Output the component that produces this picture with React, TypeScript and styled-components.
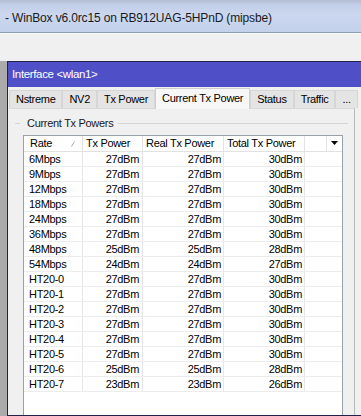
import React from "react";
import styled, { createGlobalStyle, css } from "styled-components";

const GlobalStyle = createGlobalStyle`
  html, body { margin: 0; padding: 0; background: #f0f0f0; }
  body { font-family: "Liberation Sans", Arial, sans-serif; }
  * { box-sizing: border-box; }
`;

const Screen = styled.div`
  width: 361px;
  height: 416px;
  overflow: hidden;
  display: flex;
  flex-direction: column;
  background: #f0f0f0;
`;

const TitleBar = styled.div`
  height: 33px;
  flex: none;
  display: flex;
  align-items: center;
  padding-top: 4px;
  border-bottom: 1px solid #8e9bb8;
  background: linear-gradient(
    180deg,
    #b4bdd4 0px,
    #c3cfe8 5px,
    #cbd7ef 45%,
    #c4d1eb 100%
  );
  overflow: hidden;
`;

const TitleText = styled.span`
  margin-left: 5px;
  white-space: nowrap;
  font-size: 12px;
  letter-spacing: -0.15px;
  color: #1a1a1a;
`;

const MenuStrip = styled.div`
  height: 28px;
  flex: none;
  background: #f0f0f0;
  border-top: 1px solid #fbfbfb;
`;

const Workspace = styled.div`
  flex: 1;
  display: flex;
  padding-left: 7px;
  background: #ababab;
  min-height: 0;
`;

const Window = styled.div`
  width: 380px;
  flex: none;
  display: flex;
  flex-direction: column;
  border: 1px solid #23234a;
`;

const WinTitle = styled.div`
  height: 25px;
  flex: none;
  background: #4f4fc8;
  color: #ffffff;
  font-size: 11.5px;
  letter-spacing: -0.35px;
  line-height: 25px;
  padding-left: 4px;
`;

const WinBody = styled.div`
  flex: 1;
  display: flex;
  flex-direction: column;
  background: #f0f0f0;
  padding-left: 1px;
`;

const TabRow = styled.div`
  height: 21px;
  flex: none;
  display: flex;
  align-items: flex-end;
  position: relative;
  z-index: 1;
`;

const Tab = styled.div<{ $active?: boolean }>`
  height: 18px;
  padding: 0 6px;
  border: 1px solid #d6d6d6;
  border-bottom: none;
  background: #e4e4e4;
  font-size: 11px;
  letter-spacing: -0.3px;
  line-height: 17px;
  color: #000;
  white-space: nowrap;
  ${(p) =>
    p.$active &&
    css`
      height: 21px;
      margin-bottom: -1px;
      line-height: 19px;
      background: #f7f7f7;
      border-color: #cfcfcf;
    `}
`;

const TabPanel = styled.div`
  width: 346px;
  flex: 1;
  display: flex;
  flex-direction: column;
  border-top: 1px solid #d9d9d9;
  border-right: 1px solid #b9b9b9;
  background: #f0f0f0;
  padding: 8px 6px 0 6px;
`;

const GroupHead = styled.div`
  height: 13px;
  display: flex;
  align-items: center;
`;

const GroupRule = styled.div<{ $w?: number }>`
  height: 1px;
  background: #d5d5d5;
  ${(p) => (p.$w ? `width: ${p.$w}px; flex: none;` : `flex: 1;`)}
`;

const GroupLabel = styled.span`
  font-size: 11px;
  letter-spacing: -0.3px;
  color: #1a1a1a;
  padding: 0 5px 0 7px;
  white-space: nowrap;
  line-height: 13px;
`;

const Table = styled.div`
  margin: 5px 5px 0 8px;
  flex: 1;
  border: 1px solid #9aa0a8;
  border-bottom: none;
  background: #ffffff;
`;

const HeaderRow = styled.div`
  height: 16px;
  display: grid;
  grid-template-columns: 59px 60px 81px 81px 22px 1fr;
  border-bottom: 1px solid #e2e2e2;
`;

const HeadCell = styled.div<{ $pad?: number }>`
  position: relative;
  font-size: 11px;
  letter-spacing: -0.3px;
  line-height: 15px;
  color: #000;
  padding-left: ${(p) => p.$pad ?? 3}px;
  border-right: 1px solid #e3e3e3;
  white-space: nowrap;
  overflow: hidden;
  &:last-child {
    border-right: none;
  }
`;

const SortMark = styled.svg`
  position: absolute;
  right: 7px;
  top: 5px;
`;

const DropCell = styled.div`
  display: flex;
  align-items: center;
  justify-content: center;
  padding-bottom: 2px;
`;

const DataRow = styled.div`
  height: 15px;
  display: grid;
  grid-template-columns: 59px 60px 81px 81px 1fr;
  border-bottom: 1px solid #ececec;
`;

const Cell = styled.div<{ $right?: boolean; $pad?: number }>`
  font-size: 11px;
  letter-spacing: -0.3px;
  line-height: 14px;
  color: #000;
  white-space: nowrap;
  border-right: 1px solid #e6e6e6;
  text-align: ${(p) => (p.$right ? "right" : "left")};
  ${(p) =>
    p.$right
      ? `padding-right: ${p.$pad ?? 3}px;`
      : `padding-left: ${p.$pad ?? 5}px;`}
  &:last-child {
    border-right: none;
  }
`;

type Row = [string, string, string, string];

const rows: Row[] = [
  ["6Mbps", "27dBm", "27dBm", "30dBm"],
  ["9Mbps", "27dBm", "27dBm", "30dBm"],
  ["12Mbps", "27dBm", "27dBm", "30dBm"],
  ["18Mbps", "27dBm", "27dBm", "30dBm"],
  ["24Mbps", "27dBm", "27dBm", "30dBm"],
  ["36Mbps", "27dBm", "27dBm", "30dBm"],
  ["48Mbps", "25dBm", "25dBm", "28dBm"],
  ["54Mbps", "24dBm", "24dBm", "27dBm"],
  ["HT20-0", "27dBm", "27dBm", "30dBm"],
  ["HT20-1", "27dBm", "27dBm", "30dBm"],
  ["HT20-2", "27dBm", "27dBm", "30dBm"],
  ["HT20-3", "27dBm", "27dBm", "30dBm"],
  ["HT20-4", "27dBm", "27dBm", "30dBm"],
  ["HT20-5", "27dBm", "27dBm", "30dBm"],
  ["HT20-6", "25dBm", "25dBm", "28dBm"],
  ["HT20-7", "23dBm", "23dBm", "26dBm"],
];

const tabs = [
  "Nstreme",
  "NV2",
  "Tx Power",
  "Current Tx Power",
  "Status",
  "Traffic",
  "...",
];

export default function App() {
  return (
    <>
      <GlobalStyle />
      <Screen>
        <TitleBar>
          <TitleText>- WinBox v6.0rc15 on RB912UAG-5HPnD (mipsbe)</TitleText>
        </TitleBar>
        <MenuStrip />
        <Workspace>
          <Window>
            <WinTitle>Interface &lt;wlan1&gt;</WinTitle>
            <WinBody>
              <TabRow>
                {tabs.map((t) => (
                  <Tab key={t} $active={t === "Current Tx Power"}>
                    {t}
                  </Tab>
                ))}
              </TabRow>
              <TabPanel>
                <GroupHead>
                  <GroupRule $w={5} />
                  <GroupLabel>Current Tx Powers</GroupLabel>
                  <GroupRule />
                </GroupHead>
                <Table>
                  <HeaderRow>
                    <HeadCell $pad={6}>
                      Rate
                      <SortMark width="4" height="6" viewBox="0 0 4 6">
                        <path d="M0.5 5.5 L3.5 0.5" stroke="#a8a8a8" strokeWidth="1" fill="none" />
                      </SortMark>
                    </HeadCell>
                    <HeadCell>Tx Power</HeadCell>
                    <HeadCell>Real Tx Power</HeadCell>
                    <HeadCell>Total Tx Power</HeadCell>
                    <HeadCell />
                    <DropCell>
                      <svg width="7" height="4" viewBox="0 0 7 4">
                        <path d="M0 0 H7 L3.5 4 Z" fill="#000" />
                      </svg>
                    </DropCell>
                  </HeaderRow>
                  {rows.map((r) => (
                    <DataRow key={r[0]}>
                      <Cell $pad={5}>{r[0]}</Cell>
                      <Cell $right $pad={3}>{r[1]}</Cell>
                      <Cell $right $pad={2}>{r[2]}</Cell>
                      <Cell $right $pad={2}>{r[3]}</Cell>
                      <Cell />
                    </DataRow>
                  ))}
                </Table>
              </TabPanel>
            </WinBody>
          </Window>
        </Workspace>
      </Screen>
    </>
  );
}
